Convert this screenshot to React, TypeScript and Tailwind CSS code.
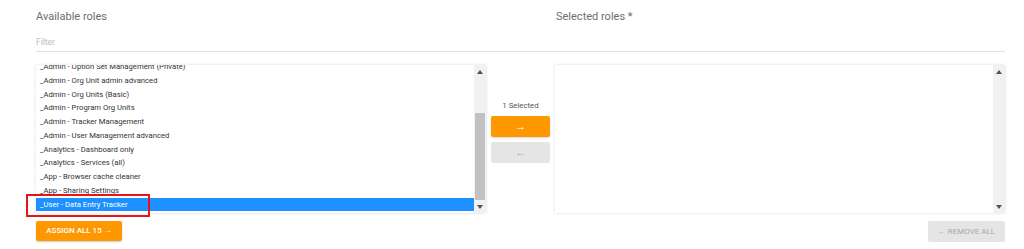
import React from "react";

const AVAILABLE = [
  "_Admin - Option Set Management (Private)",
  "_Admin - Org Unit admin advanced",
  "_Admin - Org Units (Basic)",
  "_Admin - Program Org Units",
  "_Admin - Tracker Management",
  "_Admin - User Management advanced",
  "_Analytics - Dashboard only",
  "_Analytics - Services (all)",
  "_App - Browser cache cleaner",
  "_App - Sharing Settings",
  "_User - Data Entry Tracker",
];

const SELECTED_INDEX = 10;

function ScrollBar({ thumb }: { thumb: boolean }) {
  return (
    <div className="w-[12px] bg-[#f1f1f1] flex flex-col items-center">
      <div className="h-[13px] flex items-center justify-center">
        <div className="w-0 h-0 border-l-[3px] border-r-[3px] border-b-[4px] border-l-transparent border-r-transparent border-b-[#505050]" />
      </div>
      <div className="flex-1 w-full px-[1px] pt-[35px]">
        {thumb && <div className="h-full bg-[#c1c1c1]" />}
      </div>
      <div className="h-[13px] flex items-center justify-center">
        <div className="w-0 h-0 border-l-[3px] border-r-[3px] border-t-[4px] border-l-transparent border-r-transparent border-t-[#505050]" />
      </div>
    </div>
  );
}

export default function App() {
  return (
    <div className="w-[1024px] h-[249px] bg-white pl-[36px] pr-[19px] font-['Roboto',sans-serif] overflow-hidden">
      {/* headings */}
      <div className="grid grid-cols-[520px_449px] pt-[10px] h-[33px]">
        <div className="text-[11px] leading-[14px] text-[#6e6e6e]">Available roles</div>
        <div className="text-[11px] leading-[14px] text-[#6e6e6e]">Selected roles *</div>
      </div>

      {/* filter */}
      <div className="h-[19px] border-b border-[#e0e0e0] text-[8.5px] leading-[19px] text-[#bdbdbd]">
        Filter
      </div>

      {/* lists */}
      <div className="grid grid-cols-[450px_69px_450px] mt-[13px] h-[148px]">
        <div className="relative">
          <div className="h-[148px] flex bg-white shadow-[0_0_3px_rgba(0,0,0,0.14)] overflow-hidden">
            <div className="flex-1 overflow-hidden">
              <div className="mt-[-5px]">
                {AVAILABLE.map((role, i) => (
                  <div
                    key={role}
                    className={`h-[13.78px] px-[4px] text-[7.7px] leading-[13.78px] whitespace-nowrap ${
                      i === SELECTED_INDEX ? "bg-[#1e90ff] text-white" : "text-[#333]"
                    }`}
                  >
                    {role}
                  </div>
                ))}
              </div>
            </div>
            <ScrollBar thumb />
          </div>
          {/* highlight annotation */}
          <div className="absolute left-[-10px] top-[129px] w-[124px] h-[23px] border-2 border-[#e8141b]" />
        </div>

        <div className="flex flex-col items-center pt-[35px]">
          <div className="text-[7.8px] leading-[12px] text-[#555]">1 Selected</div>
          <button className="mt-[4px] w-[59px] h-[21px] bg-[#ff9800] text-white text-[11px] leading-none rounded-[2px] shadow-[0_1px_2px_rgba(0,0,0,0.15)]">
            →
          </button>
          <button className="mt-[5px] w-[59px] h-[21px] bg-[#e5e5e5] text-[#b0b0b0] text-[11px] leading-none rounded-[2px]">
            ←
          </button>
        </div>

        <div className="h-[148px] flex bg-white shadow-[0_0_3px_rgba(0,0,0,0.14)]">
          <div className="flex-1" />
          <ScrollBar thumb={false} />
        </div>
      </div>

      {/* bottom actions */}
      <div className="flex justify-between mt-[8px]">
        <button className="w-[86px] h-[20px] bg-[#ff9800] text-white text-[8px] font-medium leading-none rounded-[2px] shadow-[0_1px_2px_rgba(0,0,0,0.2)]">
          ASSIGN ALL 15 →
        </button>
        <button className="w-[77px] h-[21px] bg-[#e5e5e5] text-[#a8a8a8] text-[8px] leading-none rounded-[2px]">
          ← REMOVE ALL
        </button>
      </div>
    </div>
  );
}
